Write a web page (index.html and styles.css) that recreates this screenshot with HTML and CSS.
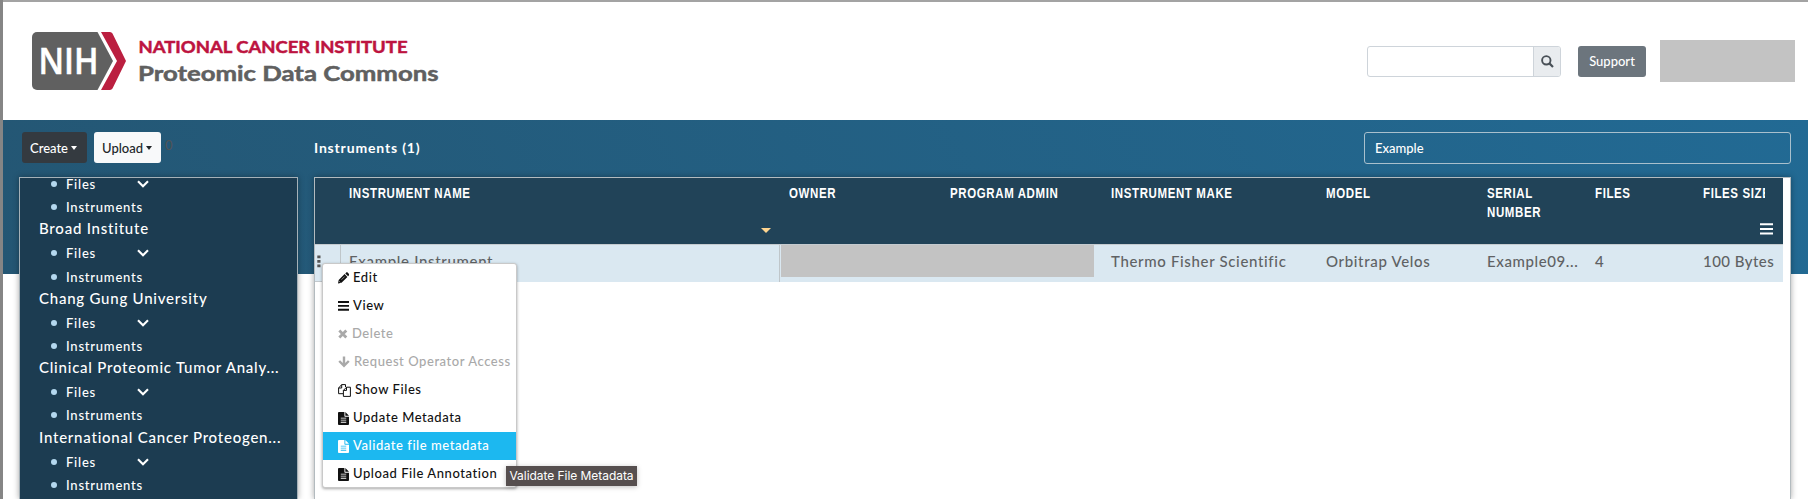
FILE: index.html
```html
<!DOCTYPE html>
<html lang="en">
<head>
<meta charset="utf-8">
<title>Proteomic Data Commons</title>
<link rel="stylesheet" href="styles.css">
</head>
<body>
<svg class="defs" width="0" height="0">
  <symbol id="file" viewBox="0 0 12 14"><path fill="currentColor" fill-rule="evenodd" d="M1 0H7V4.3a.7.7 0 0 0 .7.7H12V13a1 1 0 0 1-1 1H1a1 1 0 0 1-1-1V1A1 1 0 0 1 1 0ZM8 0 12 4H8ZM3 6.2v.9H9v-.9ZM3 8.4v.9H9v-.9ZM3 10.6v.9H9v-.9Z"/></symbol>
  <symbol id="chev" viewBox="0 0 12 8"><path d="M1 1.3 6 6.3 11 1.3" fill="none" stroke="currentColor" stroke-width="2.1"/></symbol>
</svg>
<header class="header">
  <svg class="logo" width="420" height="62" viewBox="0 0 420 62">
    <path d="M5 2H65.500L81 31 65.500 60H5a5 5 0 0 1-5-5V7A5 5 0 0 1 5 2Z" fill="#606060"/>
    <path d="M69 2H78a3 3 0 0 1 2.500 1.500L94 31 80.500 58.500A3 3 0 0 1 78 60H69L85 31Z" fill="#bb1f40"/>
    <text class="logo-nih" x="6.500" y="43.800" textLength="60" lengthAdjust="spacingAndGlyphs">NIH</text>
    <text class="logo-nci" x="106.500" y="22.800" textLength="269" lengthAdjust="spacingAndGlyphs">NATIONAL CANCER INSTITUTE</text>
    <text class="logo-pdc" x="106" y="51.300" textLength="300.500" lengthAdjust="spacingAndGlyphs">Proteomic Data Commons</text>
  </svg>
  <div class="search">
    <div class="search-input"></div>
    <div class="search-btn"><svg width="13" height="13" viewBox="0 0 13 13"><circle cx="5.300" cy="5.300" r="4.200" fill="none" stroke="#495057" stroke-width="1.900"/><path d="M8.400 8.400 12 12" stroke="#495057" stroke-width="2.200"/></svg></div>
  </div>
  <button class="btn support">Support</button>
  <div class="account"></div>
</header>
<main class="main">
  <aside class="side">
    <div class="toolbar">
      <button class="btn dark">Create<i class="caret"></i></button>
      <button class="btn light">Upload<i class="caret"></i></button>
      <span class="count">0</span>
    </div>
    <nav class="tree">
      <div class="leaf files"><span>Files</span><svg class="chev" width="12" height="8"><use href="#chev"/></svg></div>
      <div class="leaf inst"><span>Instruments</span></div>
      <div class="org">Broad Institute</div>
      <div class="leaf files"><span>Files</span><svg class="chev" width="12" height="8"><use href="#chev"/></svg></div>
      <div class="leaf inst"><span>Instruments</span></div>
      <div class="org">Chang Gung University</div>
      <div class="leaf files"><span>Files</span><svg class="chev" width="12" height="8"><use href="#chev"/></svg></div>
      <div class="leaf inst"><span>Instruments</span></div>
      <div class="org">Clinical Proteomic Tumor Analy...</div>
      <div class="leaf files"><span>Files</span><svg class="chev" width="12" height="8"><use href="#chev"/></svg></div>
      <div class="leaf inst"><span>Instruments</span></div>
      <div class="org">International Cancer Proteogen...</div>
      <div class="leaf files"><span>Files</span><svg class="chev" width="12" height="8"><use href="#chev"/></svg></div>
      <div class="leaf inst"><span>Instruments</span></div>
    </nav>
  </aside>
  <section class="content">
    <div class="bar"><h1 class="title">Instruments (1)</h1><div class="filter">Example</div></div>
    <div class="panel">
      <div class="row head">
        <div class="th"></div>
        <div class="th sorted"><b>INSTRUMENT NAME</b><i class="sort"></i></div>
        <div class="th"><b>OWNER</b></div>
        <div class="th"><b>PROGRAM ADMIN</b></div>
        <div class="th"><b>INSTRUMENT MAKE</b></div>
        <div class="th"><b>MODEL</b></div>
        <div class="th"><b>SERIAL<br>NUMBER</b></div>
        <div class="th"><b>FILES</b></div>
        <div class="th last"><span class="clip"><b>FILES SIZE</b></span><svg class="cols" width="13" height="12" viewBox="0 0 13 12"><path d="M0 1.200H13M0 5.900H13M0 10.600H13" stroke="#fff" stroke-width="2"/></svg></div>
      </div>
      <div class="row data">
        <div class="td handle"><svg width="4" height="13" viewBox="0 0 4 13"><path d="M.3.500H3.500V3.300H.3ZM.3 5H3.500V7.800H.3ZM.3 9.500H3.500V12.300H.3Z" fill="#555"/></svg></div>
        <div class="td name">Example Instrument</div>
        <div class="td masked"><div class="mask"></div></div>
        <div class="td">Thermo Fisher Scientific</div>
        <div class="td model">Orbitrap Velos</div>
        <div class="td serial">Example09...</div>
        <div class="td">4</div>
        <div class="td size">100 Bytes</div>
      </div>
    </div>
  </section>
</main>
<div class="menu">
  <div class="item"><svg width="11" height="12" viewBox="0 0 11 12"><path d="M0 11.500.7 8 6.600 2.100 9.400 4.900 3.500 10.800ZM7.300 1.400 8.300.4a1 1 0 0 1 1.300 0L11 1.900a1 1 0 0 1 0 1.300L10.100 4.200Z" fill="currentColor"/><path d="M1.200 9.200 2.400 10.400M3.500 7.700 6.700 4.500" stroke="#fff" stroke-width=".5"/></svg>Edit</div>
  <div class="item"><svg width="11" height="10" viewBox="0 0 11 10"><path d="M0 1H11M0 4.900H11M0 8.800H11" stroke="currentColor" stroke-width="1.900"/></svg>View</div>
  <div class="item off del"><svg width="10" height="10" viewBox="0 0 10 10"><path d="M1.300 1.500 8.300 8.500M8.300 1.500 1.300 8.500" stroke="currentColor" stroke-width="2.800"/></svg>Delete</div>
  <div class="item off req"><svg width="12" height="12" viewBox="0 0 12 12"><path d="M6 .5V9.500M1.200 5 6 9.800 10.800 5" fill="none" stroke="currentColor" stroke-width="2.400"/></svg>Request Operator Access</div>
  <div class="item show"><svg width="13" height="13" viewBox="0 0 13 13"><path d="M5 9.700H.6V4L3.700.6H7.500V3M3.700.6V4H.6M5.400 12.400V6.400L8.500 3.200H12.400V12.400ZM8.500 3.200V6.400H5.400" fill="none" stroke="currentColor" stroke-width="1"/></svg>Show Files</div>
  <div class="item"><svg width="11" height="13"><use href="#file"/></svg>Update Metadata</div>
  <div class="item active"><svg width="11" height="13"><use href="#file"/></svg>Validate file metadata</div>
  <div class="item"><svg width="11" height="13"><use href="#file"/></svg>Upload File Annotation</div>
</div>
<div class="tooltip">Validate File Metadata</div>
</body>
</html>
```
FILE: styles.css
```css
* { box-sizing: border-box; }
body {
  margin: 0; height: 499px; overflow: hidden; position: relative;
  display: flex; flex-direction: column;
  font: 500 13px/1.5 Lato, sans-serif; color: #212529; background: #fff;
  border-left: 3px solid #858585;
}
.defs { position: absolute; }
.header {
  height: 120px; flex: none; display: flex; align-items: flex-start;
  border-top: 2px solid #a3a3a3; padding: 38px 13px 0 29px;
}
.logo { margin-top: -10px; }
.logo-nih { font: 600 36.5px "Open Sans", sans-serif; fill: #fff; stroke: #fff; stroke-width: .5px; }
.logo-nci { font: 700 17px Lato, sans-serif; fill: #bd1340; stroke: #bd1340; stroke-width: .5px; }
.logo-pdc { font: 700 21.5px Lato, sans-serif; fill: #606060; stroke: #606060; stroke-width: .5px; }
.search { display: flex; margin: 6px 17px 0 auto; height: 31px; width: 194px; border: 1px solid #ced4da; border-radius: 3px; }
.search-input { flex: 1; border-right: 1px solid #ced4da; }
.search-btn { width: 26px; background: #e9ecef; display: flex; justify-content: center; padding-top: 8px; border-radius: 0 2px 2px 0; }
.btn { font: 500 13px/1 Lato, sans-serif; height: 31px; border: 0; border-radius: 3px; padding: 0 8px; display: flex; align-items: center; white-space: nowrap; }
.support { margin-top: 6px; width: 68px; justify-content: center; background: #6c757d; color: #fff; padding: 0; }
.account { width: 135px; height: 42px; margin-left: 14px; background: #c3c3c3; }

.main {
  flex: 1; min-height: 0; display: flex; padding: 12px 17px 0 16px;
  background: linear-gradient(60deg, #245673, #226a94) 0 0 / 100% 154px no-repeat;
}
.side { width: 279px; flex: none; display: flex; flex-direction: column; }
.toolbar { display: flex; height: 45px; padding-left: 3px; align-items: flex-start; }
.toolbar .btn { padding-top: 1px; }
.dark { background: #343a40; color: #fff; width: 65px; }
.light { background: #f8f9fa; color: #212529; width: 67px; margin-left: 7px; }
.caret { border: 3.5px solid transparent; border-top: 4px solid; border-bottom: 0; margin-left: 3px; }
.caret { border-left-color: transparent; border-right-color: transparent; }
.count { margin: 4px 0 0 4px; font-size: 13px; color: #4f5458; }
.tree {
  flex: 1; min-height: 0; overflow: hidden; background: #1c3c51; color: #fff;
  border: 1px solid #a5b1b8; border-bottom: 0; padding-left: 19px;
  box-shadow: 0 0 6px rgba(0,0,0,.35); letter-spacing: .77px;
}
.org { font-size: 15px; line-height: 23.2px; height: 23.2px; white-space: nowrap; }
.leaf { display: flex; align-items: center; font-size: 13px; padding-left: 12px; }
.leaf::before { content: ""; width: 6px; height: 6px; border-radius: 50%; background: #b4d8ef; margin-right: 9px; }
.leaf span { line-height: 20px; }
.files { height: 25.8px; }
.files:first-child { margin-top: -6.800px; }
.inst { height: 20.4px; }
.chev { margin-left: 41px; }

.content { flex: 1; min-width: 0; margin-left: 16px; display: flex; flex-direction: column; }
.bar { display: flex; height: 45px; justify-content: space-between; align-items: flex-start; }
.title { margin: 5px 0 0; font-size: 14px; line-height: 21px; letter-spacing: .83px; color: #fff; }
.filter { width: 427px; height: 31.500px; border: 1px solid #a9c0cd; border-radius: 3px; color: #fff; padding-left: 10px; line-height: 30px; }
.panel { flex: 1; min-height: 0; background: #fff; border: 1px solid #b3bbbf; border-bottom: 0; box-shadow: 0 0 6px rgba(0,0,0,.35); padding-right: 7px; }
.row { display: grid; grid-template-columns: 25px 440px 161px 161px 215px 161px 108px 108px 1fr; }
.head { height: 66px; background: #214358; color: #fff; }
.th { position: relative; padding: 6px 0 0 9px; font: 700 14px/18.500px "Liberation Sans", Arial, sans-serif; letter-spacing: .76px; white-space: nowrap; }
.th b { display: inline-block; transform: scaleX(.82); transform-origin: 0 0; }
.clip { display: block; width: 62px; overflow: hidden; }
.sort { position: absolute; right: 9px; top: 50px; border: 5px solid transparent; border-top: 5px solid #ffd58f; border-bottom: 0; }
.cols { position: absolute; right: 10px; bottom: 9px; }
.data { height: 38px; background: #dae8f1; border-top: 1px solid #c5cbcf; }
.td { padding-left: 9px; font-size: 15px; line-height: 33px; letter-spacing: .66px; color: #5f6264; white-space: nowrap; }
.handle { padding: 10px 0 0 2px; line-height: 0; border-bottom: 1px solid #c3c9cd; }
.name { box-shadow: inset 1px 0 #bfc6ca, inset -1px 0 #bfc6ca; }
.masked { grid-column: span 2; padding: 0 8px 0 1px; }
.mask { height: 32px; background: #c3c3c3; }
.model { letter-spacing: .66px; }
.serial { letter-spacing: .6px; }
.size { letter-spacing: .45px; }

.menu { position: absolute; left: 319px; top: 263px; width: 195px; height: 225px; background: #fff; border: 1px solid #c9c9c9; border-radius: 3px; box-shadow: 0 1px 3px rgba(0,0,0,.35); color: #111; }
.item { display: flex; align-items: center; height: 28px; padding: 0 0 0 15px; letter-spacing: .56px; white-space: nowrap; }
.item svg { margin-right: 4px; flex: none; }
.off { color: #a9a9a9; }
.show svg { margin-right: 4px; }
.active { background: #1cb8f0; color: #fff; }
.tooltip { position: absolute; left: 503px; top: 466px; width: 131px; height: 20px; background: #564f4f; color: #fff; font: 12px/20px Inter, sans-serif; letter-spacing: -.05px; text-align: center; white-space: nowrap; box-shadow: 0 1px 5px rgba(0,0,0,.25); }
```
